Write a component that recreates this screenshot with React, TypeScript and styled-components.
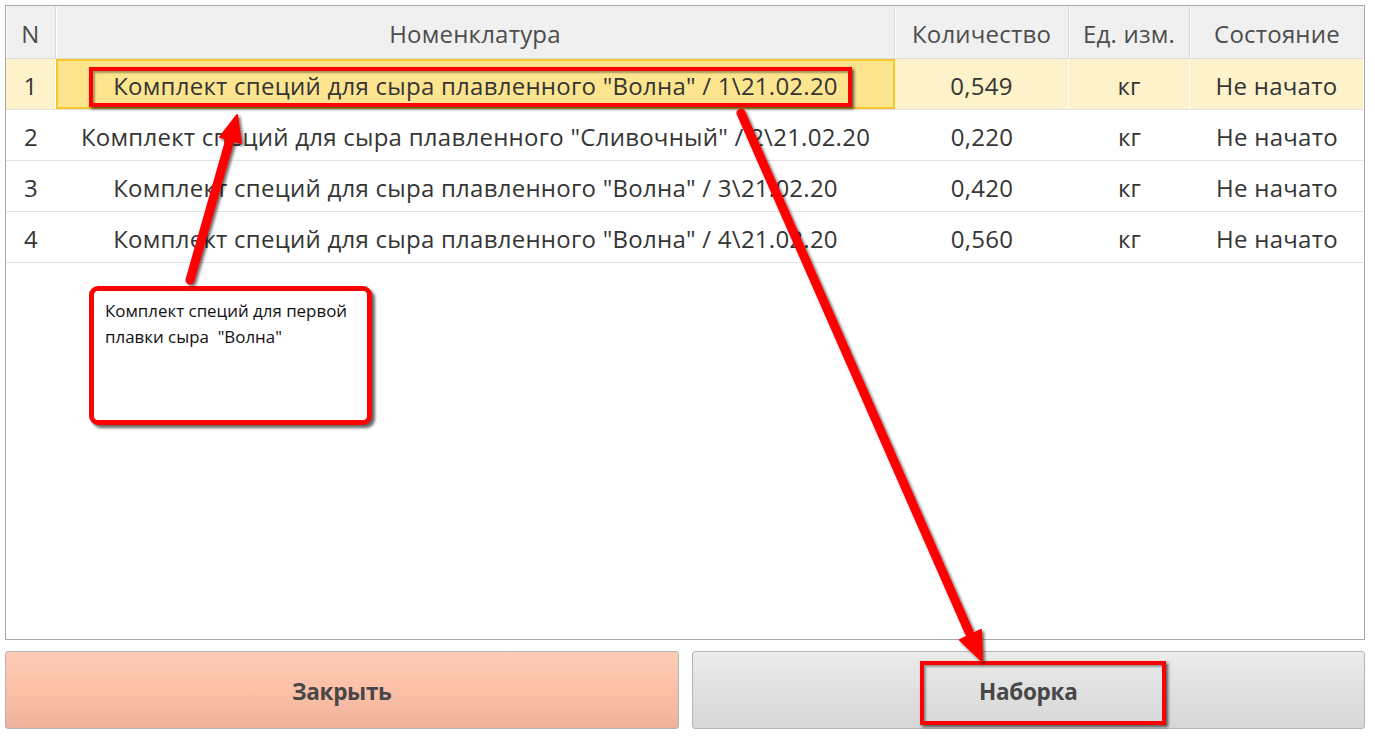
import React from "react";
import styled, { createGlobalStyle } from "styled-components";

const Global = createGlobalStyle`
  html, body { margin: 0; padding: 0; background: #ffffff; }
  body { font-family: "Open Sans", "Noto Sans", sans-serif; }
  * { box-sizing: border-box; }
`;

const Page = styled.div`
  position: relative;
  width: 1375px;
  height: 736px;
  padding: 5px 10px 0 5px;
  display: flex;
  flex-direction: column;
  gap: 11px;
  background: #fff;
`;

const Panel = styled.div`
  height: 635px;
  border: 1px solid #a8a8a8;
  background: #fff;
  display: flex;
  flex-direction: column;
`;

const COLS = "50px 839px 174px 121px 1fr";

const HeaderRow = styled.div`
  display: grid;
  grid-template-columns: ${COLS};
  height: 53px;
  background: #f0f0f0;
  border-bottom: 1px solid #dcdcdc;
`;

const HeadCell = styled.div`
  display: flex;
  align-items: center;
  justify-content: center;
  font-size: 24px;
  letter-spacing: 0.2px;
  color: #4d4d4d;
  padding-top: 2px;
  border-right: 1px solid #dadada;
  box-shadow: inset 1px 0 0 #ffffff;
  &:last-child { border-right: none; }
`;

const Row = styled.div`
  display: grid;
  grid-template-columns: ${COLS};
  height: 51px;
  border-bottom: 1px solid #e3e3e3;
  background: #fff;
`;

const Cell = styled.div<{ $selected?: boolean; $focus?: boolean }>`
  display: flex;
  align-items: center;
  justify-content: center;
  font-size: 24px;
  letter-spacing: 0.25px;
  padding-top: 3px;
  color: #353535;
  white-space: nowrap;
  background: ${(p) => (p.$focus ? "#fde48e" : p.$selected ? "#fdf2c9" : "transparent")};
  border: ${(p) => (p.$focus ? "2px solid #f8c62a" : "none")};
  border-right: ${(p) =>
    p.$focus ? "2px solid #f8c62a" : p.$selected ? "1px solid #ffffff" : "none"};
`;

const ButtonRow = styled.div`
  display: flex;
  gap: 13px;
  height: 78px;
`;

const Button = styled.button<{ $variant: "close" | "plain" }>`
  flex: 1;
  height: 78px;
  padding-top: 3px;
  border: 1px solid #b4b4b4;
  border-radius: 3px;
  font-family: "Open Sans", "Noto Sans", sans-serif;
  font-weight: 700;
  font-size: 22.5px;
  letter-spacing: -0.3px;
  color: #474747;
  cursor: pointer;
  background: ${(p) =>
    p.$variant === "close"
      ? "linear-gradient(#fecdb8 0%, #fcc0a6 50%, #efb19c 100%)"
      : "linear-gradient(#ececec 0%, #e0e0e0 50%, #d7d7d7 100%)"};
`;

const RedFrame = styled.div<{ $x: number; $y: number; $w: number; $h: number }>`
  position: absolute;
  left: ${(p) => p.$x}px;
  top: ${(p) => p.$y}px;
  width: ${(p) => p.$w}px;
  height: ${(p) => p.$h}px;
  border: 4px solid #ff0000;
  box-shadow: 2px 2px 3px rgba(0, 0, 0, 0.65), inset 2px 2px 2px rgba(0, 0, 0, 0.35);
  pointer-events: none;
`;

const Callout = styled.div`
  position: absolute;
  left: 89px;
  top: 286px;
  width: 283px;
  height: 139px;
  border: 5px solid #ff0000;
  border-radius: 9px;
  background: #fff;
  box-shadow: 3px 3px 3px rgba(0, 0, 0, 0.6);
  padding: 7px 4px 0 11px;
  font-size: 16.9px;
  line-height: 26px;
  color: #111;
  white-space: pre;
`;

const ArrowLayer = styled.svg`
  position: absolute;
  left: 0;
  top: 0;
  width: 1375px;
  height: 736px;
  pointer-events: none;
  overflow: visible;
`;

const rows = [
  { n: "1", name: 'Комплект специй для сыра плавленного "Волна" / 1\\21.02.20', qty: "0,549" },
  { n: "2", name: 'Комплект специй для сыра плавленного "Сливочный" / 2\\21.02.20', qty: "0,220" },
  { n: "3", name: 'Комплект специй для сыра плавленного "Волна" / 3\\21.02.20', qty: "0,420" },
  { n: "4", name: 'Комплект специй для сыра плавленного "Волна" / 4\\21.02.20', qty: "0,560" },
];

export default function App() {
  return (
    <>
      <Global />
      <Page>
        <Panel>
          <HeaderRow>
            <HeadCell>N</HeadCell>
            <HeadCell>Номенклатура</HeadCell>
            <HeadCell>Количество</HeadCell>
            <HeadCell>Ед. изм.</HeadCell>
            <HeadCell>Состояние</HeadCell>
          </HeaderRow>
          {rows.map((r, i) => {
            const sel = i === 0;
            return (
              <Row key={r.n}>
                <Cell $selected={sel}>{r.n}</Cell>
                <Cell $selected={sel} $focus={sel}>{r.name}</Cell>
                <Cell $selected={sel}>{r.qty}</Cell>
                <Cell $selected={sel}>кг</Cell>
                <Cell $selected={sel}>Не начато</Cell>
              </Row>
            );
          })}
        </Panel>
        <ButtonRow>
          <Button $variant="close">Закрыть</Button>
          <Button $variant="plain">Наборка</Button>
        </ButtonRow>

        <RedFrame $x={89} $y={67} $w={763} $h={40} />
        <RedFrame $x={920} $y={661} $w={246} $h={64} />
        <Callout>{'Комплект специй для первой\nплавки сыра  "Волна"'}</Callout>

        <ArrowLayer viewBox="0 0 1375 736">
          <defs>
            <filter id="sh" x="-20%" y="-20%" width="140%" height="140%">
              <feDropShadow dx="2" dy="2" stdDeviation="1.6" floodColor="#000" floodOpacity="0.6" />
            </filter>
          </defs>
          <g filter="url(#sh)" fill="#ff0000" stroke="#ff0000">
            <line x1="190" y1="280" x2="231" y2="136" strokeWidth="9" strokeLinecap="round" />
            <polygon points="237,115 241,143 220,137" strokeWidth="2" strokeLinejoin="round" />
            <line x1="741" y1="113" x2="969" y2="632" strokeWidth="9" strokeLinecap="round" />
            <polygon points="982,661 981,630 960,640" strokeWidth="2" strokeLinejoin="round" />
          </g>
        </ArrowLayer>
      </Page>
    </>
  );
}
